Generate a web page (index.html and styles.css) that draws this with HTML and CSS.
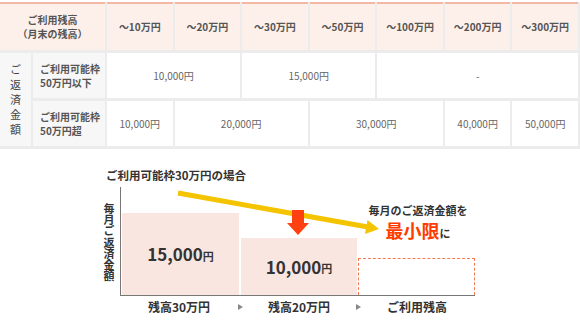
FILE: index.html
```html
<!DOCTYPE html>
<html lang="ja">
<head>
<meta charset="utf-8">
<link rel="stylesheet" href="styles.css">
</head>
<body>
<div class="table">
  <div class="hd hd-first">ご利用残高<br>（月末の残高）</div>
  <div class="hd">～10万円</div>
  <div class="hd">～20万円</div>
  <div class="hd">～30万円</div>
  <div class="hd">～50万円</div>
  <div class="hd">～100万円</div>
  <div class="hd">～200万円</div>
  <div class="hd">～300万円</div>

  <div class="vcell"><span class="vtext">ご返済金額</span></div>
  <div class="label">ご利用可能枠<br>50万円以下</div>
  <div class="cell span2">10,000円</div>
  <div class="cell span2">15,000円</div>
  <div class="cell span3">-</div>

  <div class="label">ご利用可能枠<br>50万円超</div>
  <div class="cell">10,000円</div>
  <div class="cell span2">20,000円</div>
  <div class="cell span2">30,000円</div>
  <div class="cell">40,000円</div>
  <div class="cell">50,000円</div>
</div>

<section class="chart">
  <div class="title">ご利用可能枠30万円の場合</div>
  <div class="plot-row">
    <div class="ylabel">毎月ご返済金額</div>
    <div class="plot">
      <div class="bar bar1"><span class="num">15,000</span><span class="yen">円</span></div>
      <div class="bar bar2"><span class="num">10,000</span><span class="yen">円</span></div>
      <div class="bar bar3"></div>
    </div>
  </div>
  <div class="xlabels">
    <div class="xl xl1">残高30万円</div>
    <div class="tri"></div>
    <div class="xl xl2">残高20万円</div>
    <div class="tri"></div>
    <div class="xl xl3">ご利用残高</div>
  </div>

  <svg class="arrows" width="580" height="172" viewBox="0 0 580 172">
    <line x1="178" y1="44" x2="368" y2="78" stroke="#f5c400" stroke-width="5"/>
    <polygon points="379,80 365,85 367.5,71" fill="#f5c400"/>
    <rect x="292" y="61" width="12" height="14" fill="#ff4010"/>
    <polygon points="287,74 309,74 298,86" fill="#ff4010"/>
  </svg>

  <div class="callout">
    <div class="c1">毎月のご返済金額を</div>
    <div class="c2"><span class="big">最小限</span>に</div>
  </div>
</section>
</body>
</html>
```

FILE: styles.css
```css
* { box-sizing: border-box; }
html, body { margin: 0; padding: 0; background: #fff; }
body {
  font-family: "Noto Sans CJK JP", "Noto Sans", sans-serif;
  color: #555;
  width: 580px;
  overflow: hidden;
}

.table {
  display: grid;
  grid-template-columns: 31px 72px repeat(7, 1fr);
  grid-template-rows: 48px 45px 45px;
  column-gap: 2px;
  row-gap: 3px;
  background: #ececec;
  margin-top: 2px;
  padding: 0 2px 3px 0;
  font-size: 10px;
  line-height: 14px;
}

.hd {
  background: #fdf0eb;
  border-top: 2px solid #f2b8a4;
  display: flex;
  align-items: center;
  justify-content: center;
  text-align: center;
  font-weight: bold;
  color: #555;
}
.hd-first { grid-column: span 2; }

.vcell {
  grid-row: span 2;
  background: #f7f7f7;
  display: flex;
  align-items: center;
  justify-content: center;
}
.vtext {
  writing-mode: vertical-rl;
  letter-spacing: 4px;
  font-size: 11px;
  line-height: 12px;
  color: #444;
  margin-top: 4px;
}

.label {
  background: #f7f7f7;
  display: flex;
  align-items: center;
  padding-left: 7px;
  font-weight: bold;
  color: #555;
}

.cell {
  background: #fff;
  display: flex;
  align-items: center;
  justify-content: center;
  color: #666;
}
.span2 { grid-column: span 2; }
.span3 { grid-column: span 3; }

/* chart */
.chart {
  position: relative;
  height: 172px;
  color: #333;
}
.title {
  padding: 18px 0 0 106px;
  font-size: 11.5px;
  line-height: 16px;
  font-weight: bold;
}
.plot-row {
  display: flex;
  margin-top: 4px;
  padding-left: 103px;
}
.ylabel {
  writing-mode: vertical-rl;
  font-size: 11px;
  line-height: 12px;
  letter-spacing: 0.3px;
  font-weight: bold;
  width: 12px;
  align-self: center;
  margin-right: 5px;
  margin-top: 2px;
}
.plot {
  width: 355px;
  height: 109px;
  border-left: 1px solid #777;
  border-bottom: 1px solid #777;
  display: flex;
  align-items: flex-end;
  padding-left: 1px;
}
.bar {
  display: flex;
  align-items: center;
  justify-content: center;
  background: #f9e6e0;
}
.bar1 { width: 117px; height: 82px; margin-right: 2px; }
.bar2 { width: 116px; height: 57px; margin-right: 1px; }
.bar3 {
  width: 117px;
  height: 37px;
  background: transparent;
  border: 1px dashed #f47a55;
  border-bottom: none;
}
.num {
  font-size: 17px;
  font-weight: bold;
  line-height: 20px;
  color: #333;
}
.yen {
  font-size: 11px;
  font-weight: bold;
  line-height: 20px;
  padding-top: 3px;
  color: #333;
}

.xlabels {
  display: flex;
  align-items: center;
  padding-left: 122px;
  margin-top: 3px;
  font-size: 12px;
  line-height: 16px;
  font-weight: bold;
}
.xl { text-align: center; }
.xl1 { width: 114px; }
.xl2 { width: 110px; }
.xl3 { width: 110px; }
.tri {
  width: 8px;
  height: 6px;
  display: flex;
  justify-content: center;
}
.tri::before {
  content: "";
  border-left: 5px solid #888;
  border-top: 3px solid transparent;
  border-bottom: 3px solid transparent;
}

.arrows {
  position: absolute;
  left: 0;
  top: 0;
  pointer-events: none;
}

.callout {
  position: absolute;
  left: 358px;
  top: 54px;
  width: 120px;
  text-align: center;
  font-weight: bold;
}
.c1 { font-size: 11px; line-height: 15px; height: 15px; }
.c2 {
  font-size: 11px;
  line-height: 20px;
  height: 20px;
  margin-top: 2px;
  display: flex;
  justify-content: center;
  align-items: baseline;
}
.big {
  display: inline-block;
  font-size: 18px;
  line-height: 20px;
  color: #ff3c00;
}
```
